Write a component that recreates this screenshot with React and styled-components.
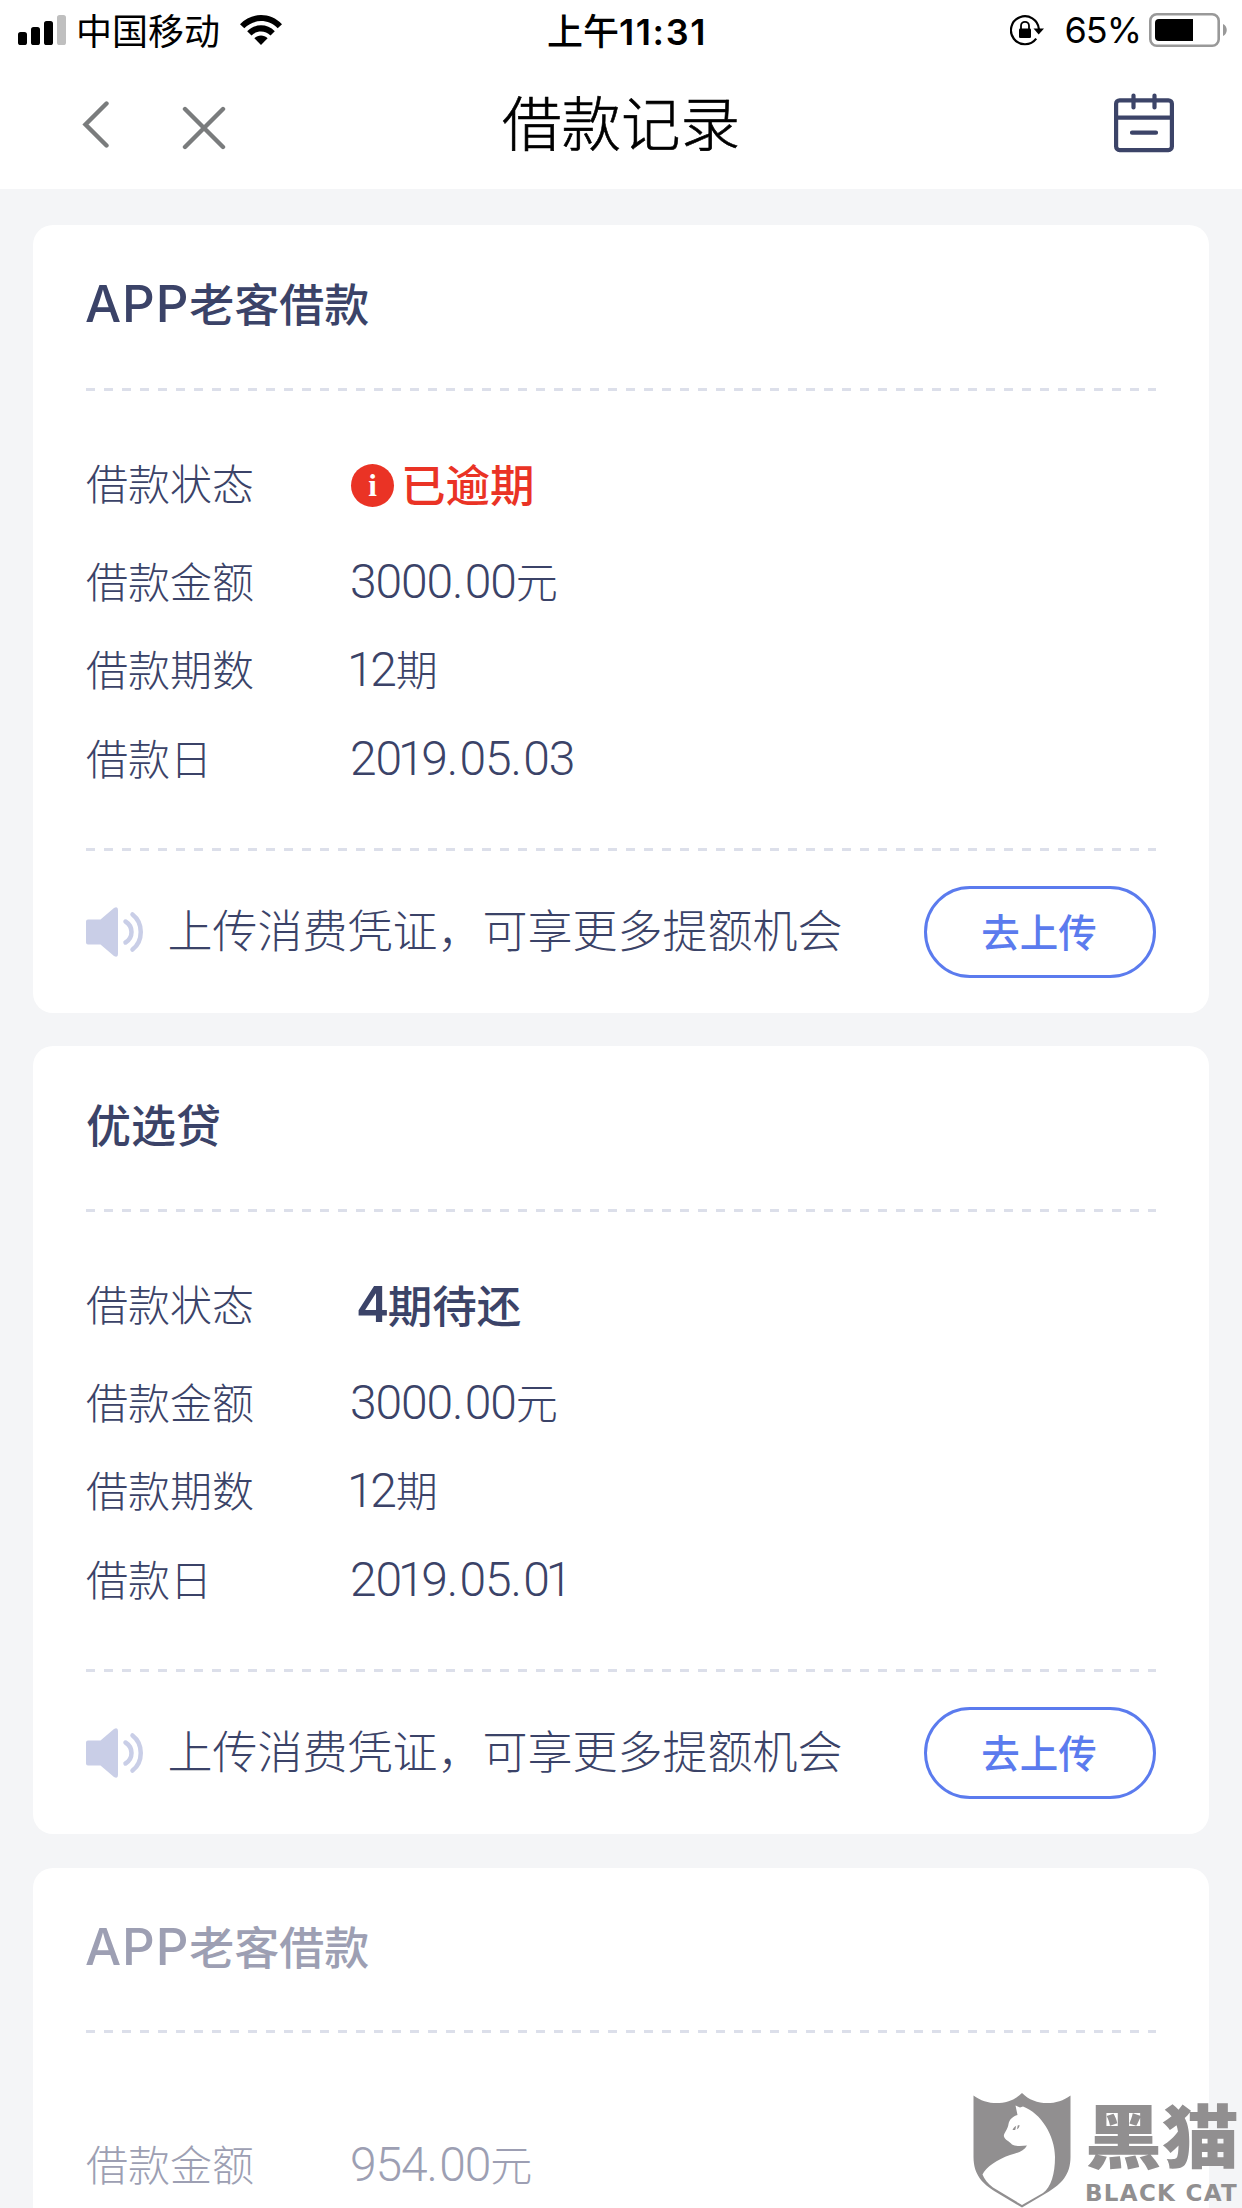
import React from "react";
import styled, { createGlobalStyle } from "styled-components";

export default function App() {
  const loans = [
    {
      id: 1,
      latin: "APP",
      name: "老客借款",
      status: "overdue",
      amount: "3000.00",
      periods: "12",
      date: "2019.05.03",
    },
    {
      id: 2,
      latin: "",
      name: "优选贷",
      status: "pending",
      amount: "3000.00",
      periods: "12",
      date: "2019.05.01",
    },
    {
      id: 3,
      latin: "APP",
      name: "老客借款",
      status: "",
      amount: "954.00",
      muted: true,
    },
  ];

  return (
    <>
      <GlobalStyle />
      <Screen>
        <StatusBar />
        <NavBar />
        <List>
          {loans.map((loan) => (
            <LoanCard key={loan.id} loan={loan} />
          ))}
        </List>
        <BlackCat />
      </Screen>
    </>
  );
}

function StatusBar() {
  return (
    <Status>
      <StatusLeft>
        <svg width="49" height="30" viewBox="0 0 49 30">
          <rect x="0" y="17" width="9" height="13" rx="2.6" />
          <rect x="13" y="12" width="9" height="18" rx="2.6" />
          <rect x="26" y="6" width="9" height="24" rx="2.6" />
          <rect x="39" y="0" width="9" height="30" rx="2.6" fill="#bfbfbf" />
        </svg>
        <Carrier>中国移动</Carrier>
        <svg width="42" height="30" viewBox="0 0 42 30">
          <path d="M0 9.2C11.500 -3 30.500 -3 42 9.200L37.700 13.300C28.500 3.700 13.500 3.700 4.300 13.300Z" />
          <path d="M7.200 16.200C14.800 8.400 27.200 8.400 34.800 16.200L30.500 20.500C25.200 15.200 16.800 15.200 11.500 20.500Z" />
          <path d="M14.400 23.300C18 19.700 24 19.700 27.600 23.300L21 30Z" />
        </svg>
      </StatusLeft>
      <Time>
        上午<span>11:31</span>
      </Time>
      <StatusRight>
        <svg width="34" height="31" viewBox="0 0 34 31">
          <path
            d="M26.200 23.600A14 14 0 1 1 28.900 14"
            fill="none"
            stroke="#000"
            strokeWidth="2.2"
          />
          <path d="M23.500 13.500H34L28.700 19.500Z" />
          <rect x="9" y="13.500" width="12" height="9.500" rx="1.300" />
          <path
            d="M11 14V10.800A4 4 0 0 1 19 10.800V14"
            fill="none"
            stroke="#000"
            strokeWidth="1.800"
          />
        </svg>
        <Percent>65%</Percent>
        <svg width="79" height="34" viewBox="0 0 79 34">
          <rect
            x="1.300"
            y="1.300"
            width="68.400"
            height="31.400"
            rx="6.500"
            fill="none"
            stroke="#999"
            strokeWidth="2.600"
          />
          <path d="M10 6H44V28H10A4 4 0 0 1 6 24V10A4 4 0 0 1 10 6Z" />
          <path d="M74 11C79 13 79 21 74 23Z" fill="#999" />
        </svg>
      </StatusRight>
    </Status>
  );
}

function NavBar() {
  return (
    <Nav>
      <NavLeft>
        <svg width="28" height="48" viewBox="0 0 28 48">
          <path d="M24.500 3.500L3.500 24.500L24.500 45.500" />
        </svg>
        <svg width="44" height="44" viewBox="0 0 44 44">
          <path d="M3 3L41 41M41 3L3 41" />
        </svg>
      </NavLeft>
      <NavTitle>借款记录</NavTitle>
      <NavRight>
        <svg
          width="60"
          height="60"
          viewBox="0 0 60 60"
          fill="none"
          stroke="#3c4468"
          strokeWidth="4.200"
          strokeLinecap="round"
        >
          <rect x="2.100" y="7.300" width="55.800" height="49.800" rx="3.500" />
          <path d="M2.500 24.700H57.500M19.500 2.500V14.500M40.500 2.500V14.500M18 39.700H42" />
        </svg>
      </NavRight>
    </Nav>
  );
}

// the digit 1 is set tighter than the others, the point looser
function Figure({ value }) {
  return (
    <Digits>
      {value.split(/([1.])/).map((part, i) => {
        if (part === "1") return <One key={i}>1</One>;
        if (part === ".") return <Point key={i}>.</Point>;
        return part;
      })}
    </Digits>
  );
}

function LoanCard({ loan }) {
  return (
    <Card $muted={loan.muted}>
      <CardTitle>
        {loan.latin && <TitleLatin>{loan.latin}</TitleLatin>}
        {loan.name}
      </CardTitle>
      <Divider />
      <Rows $noStatus={!loan.status}>
        {loan.status && (
          <Row $tall>
            <Label>借款状态</Label>
            {loan.status === "overdue" ? (
              <State $overdue>
                <Alert>i</Alert>
                已逾期
              </State>
            ) : (
              <State>
                <StateDigit>4</StateDigit>
                期待还
              </State>
            )}
          </Row>
        )}
        <Row>
          <Label>借款金额</Label>
          <Value>
            <Figure value={loan.amount} />元
          </Value>
        </Row>
        {loan.periods && (
          <Row>
            <Label>借款期数</Label>
            <Value>
              <Figure value={loan.periods} />期
            </Value>
          </Row>
        )}
        {loan.date && (
          <Row>
            <Label>借款日</Label>
            <Value>
              <Figure value={loan.date} />
            </Value>
          </Row>
        )}
      </Rows>
      {!loan.muted && (
        <>
          <Divider />
          <Notice>
            <svg width="58" height="50" viewBox="0 0 58 50">
              <path
                d="M0 14.500Q0 12.500 2 12.500H14.500L28 1Q32 -1 32 3V47Q32 51 28 49L14.500 37.500H2Q0 37.500 0 35.500Z"
                fill="#c9cee7"
              />
              <path
                d="M39.500 14.500C47.500 19.500 47.500 30.500 39.500 35.500M46.500 7.500C57.500 16 57.500 34 46.500 42.500"
                fill="none"
                stroke="#c9cee7"
                strokeWidth="4.500"
                strokeLinecap="round"
              />
            </svg>
            <NoticeText>上传消费凭证，可享更多提额机会</NoticeText>
            <Upload>去上传</Upload>
          </Notice>
        </>
      )}
    </Card>
  );
}

function BlackCat() {
  return (
    <Watermark>
      <svg width="98" height="115" viewBox="0 0 98 115">
        <path
          d="M0.500 2.500C15 13.500 37 12.500 49 0C61 12.500 83 13.500 97.500 2.500V64C97.500 82 88 91 76 98.500L49 114.500L22 98.500C10 91 0.500 82 0.500 64Z"
          fill="#918f90"
        />
        <path
          d="M42.500 12.500L47 14.500L50 13.500C68 20 82 43 82 64C82 81 78 94 70 100L49 112L20 94.500C15 90.500 11 86 9.500 81.500C13 74 24 66.500 37 62C45 60 51 58 54 52.500C49 53 42 53.500 39 51.500C36 48 32 47 31 43.500C30 41 35 36.500 35.500 31C36.500 26 40 23.500 44.500 22Z"
          fill="#fff"
        />
        <path
          d="M39.500 37C41 33.500 43.500 32.500 46.500 32C46.500 35.500 43.500 37.500 39.500 37Z"
          fill="#918f90"
        />
        <path d="M44 32L43 37.500" stroke="#fff" strokeWidth="1.500" />
      </svg>
      <Brand>
        <BrandName>黑猫</BrandName>
        <BrandLatin>BLACK CAT</BrandLatin>
      </Brand>
    </Watermark>
  );
}

const GlobalStyle = createGlobalStyle`
  body {
    margin: 0;
    background: #f4f5f7;
  }
  * {
    box-sizing: border-box;
  }
  svg {
    display: block;
    flex-shrink: 0;
  }
`;
const Screen = styled.div`
  position: relative;
  width: 1242px;
  height: 2208px;
  overflow: hidden;
  background: #f4f5f7;
  font-family: "Noto Sans CJK SC", sans-serif;
  color: #3b4368;
`;
const Status = styled.div`
  display: grid;
  grid-template-columns: 1fr auto 1fr;
  align-items: center;
  height: 60px;
  padding: 0 14px 0 18px;
  background: #fff;
  color: #000;
  font-size: 36px;
  line-height: 60px;
`;
const StatusLeft = styled.div`
  display: flex;
  align-items: center;
`;
const Carrier = styled.div`
  margin: 0 20px 0 9px;
  height: 60px;
  line-height: 58px;
`;
const Time = styled.div`
  height: 60px;
  margin-left: 8px;
  line-height: 58px;
  font-weight: 500;

  span {
    font-family: Inter, sans-serif;
    font-weight: 600;
    letter-spacing: 1.6px;
    line-height: 0;
  }
`;
const StatusRight = styled.div`
  display: flex;
  align-items: center;
  justify-content: flex-end;
`;
const Percent = styled.div`
  margin: 0 8px 0 20px;
  font-family: Inter, sans-serif;
  letter-spacing: -1px;
`;
const Nav = styled.div`
  display: grid;
  grid-template-columns: 1fr auto 1fr;
  height: 129px;
  padding: 0 68px;
  background: #fff;
`;
const NavLeft = styled.div`
  display: flex;
  align-items: flex-start;
  gap: 72px;
  padding: 40px 0 0 14px;

  svg {
    fill: none;
    stroke: #7a7c7d;
    stroke-width: 4.4px;
    stroke-linecap: round;
  }
  svg + svg {
    margin-top: 6px;
  }
`;
const NavTitle = styled.div`
  color: #000;
  font-size: 59.5px;
  font-weight: 300;
  line-height: 121px;
  -webkit-text-stroke: 0.6px #000;
`;
const NavRight = styled.div`
  display: flex;
  justify-content: flex-end;
  padding-top: 33px;
`;
const List = styled.div`
  display: flex;
  flex-direction: column;
  gap: 33.3px;
  padding: 36px 33px 0;
`;
const Card = styled.div`
  flex-shrink: 0;
  height: 788px;
  padding: 0 53px;
  border-radius: 20px;
  background: #fff;
  color: ${(props) => (props.$muted ? "#9d9fb3" : "#3b4368")};
`;
const CardTitle = styled.div`
  height: 162.8px;
  font-size: 45px;
  font-weight: 500;
  line-height: 156px;
`;
const TitleLatin = styled.span`
  margin-left: -1px;
  font-family: Inter, sans-serif;
  font-size: 51px;
  font-weight: 500;
  letter-spacing: 0.9px;
  line-height: 0;
`;
const Divider = styled.div`
  height: 3px;
  background: repeating-linear-gradient(
    90deg,
    #dcdfea 0 9px,
    transparent 9px 18px
  );
`;
const Rows = styled.div`
  height: 457px;
  padding-top: ${(props) => (props.$noStatus ? "86px" : "48px")};
`;
const Row = styled.div`
  display: flex;
  align-items: center;
  height: 88.5px;
  margin-bottom: ${(props) => (props.$tall ? "9px" : "0")};
  line-height: 86px;
`;
const Label = styled.div`
  width: 265px;
  height: 88px;
  font-size: 42px;
  font-weight: 300;
`;
const Value = styled.div`
  height: 88px;
  margin-left: -1px;
  font-size: 42px;
  font-weight: 300;
`;
const Digits = styled.span`
  font-family: Roboto, sans-serif;
  font-size: 48px;
  font-weight: 300;
  letter-spacing: -1.1px;
  line-height: 0;
`;
const One = styled.span`
  margin-left: -3px;
  letter-spacing: -3.4px;
`;
const Point = styled.span`
  letter-spacing: 1.2px;
`;
const State = styled.div`
  display: flex;
  align-items: center;
  height: 88px;
  padding-left: ${(props) => (props.$overdue ? "0" : "5px")};
  color: ${(props) => (props.$overdue ? "#ea3325" : "#3b4368")};
  font-size: 44.5px;
  font-weight: 500;
  line-height: 84px;
`;
const StateDigit = styled.span`
  font-family: Inter, sans-serif;
  font-size: 50px;
  font-weight: 600;
  letter-spacing: -1.6px;
`;
const Alert = styled.span`
  width: 43px;
  height: 43px;
  margin: 5px 7px 0 0;
  border-radius: 50%;
  background: #ea3325;
  color: #fff;
  font-family: "Liberation Serif", serif;
  font-size: 31px;
  font-weight: 700;
  line-height: 43px;
  text-align: center;
`;
const Notice = styled.div`
  display: flex;
  align-items: center;
  height: 162px;
`;
const NoticeText = styled.div`
  height: 92px;
  margin-left: 23.5px;
  font-size: 45px;
  font-weight: 300;
  line-height: 86px;
  white-space: nowrap;
`;
const Upload = styled.div`
  width: 232px;
  height: 92px;
  margin-left: auto;
  padding-right: 2px;
  border: 3px solid #5b7bee;
  border-radius: 46px;
  color: #5b7bee;
  font-size: 38.5px;
  font-weight: 500;
  line-height: 83px;
  text-align: center;
`;
const Watermark = styled.div`
  position: absolute;
  right: 3px;
  bottom: 0;
  display: flex;
  width: 266px;
  height: 115px;
  color: #918f90;
`;
const Brand = styled.div`
  margin-left: 14px;
`;
const BrandName = styled.div`
  height: 86px;
  font-size: 77px;
  font-weight: 900;
  line-height: 80px;
  white-space: nowrap;
  transform: scaleY(0.9);
`;
const BrandLatin = styled.div`
  font-family: "DejaVu Sans", sans-serif;
  font-size: 23px;
  font-weight: 700;
  letter-spacing: 1.3px;
  line-height: 28px;
  white-space: nowrap;
`;
